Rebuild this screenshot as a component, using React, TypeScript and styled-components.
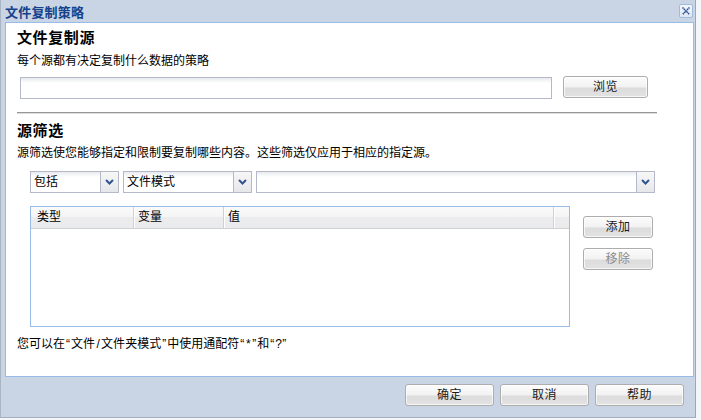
import React from "react";
import styled, { createGlobalStyle } from "styled-components";

const FONT = `"Liberation Sans", "Noto Sans CJK SC", sans-serif`;

const GlobalStyle = createGlobalStyle`
  html, body {
    margin: 0;
    padding: 0;
    background: #f4f6f9;
  }
  body {
    font-family: ${FONT};
    font-size: 12px;
    color: #000;
  }
`;

const Window = styled.div`
  width: 696px;
  height: 418px;
  box-sizing: border-box;
  background: #c9d5e4;
  border-left: 1px solid #aab5c3;
  border-right: 1px solid #9ba8b9;
  border-bottom: 1px solid #a4afbe;
  display: flex;
  flex-direction: column;
`;

const TitleBar = styled.div`
  height: 22px;
  flex: none;
  display: flex;
  align-items: center;
  justify-content: space-between;
  padding: 0 2px 0 4px;
`;

const Title = styled.span`
  font-weight: bold;
  font-size: 13px;
  color: #15428b;
  letter-spacing: 0.2px;
`;

const CloseButton = styled.div`
  width: 14px;
  height: 14px;
  box-sizing: border-box;
  border: 1px solid #a3bbdb;
  border-radius: 2px;
  background: linear-gradient(#f3f7fc, #dce6f3);
  display: flex;
  align-items: center;
  justify-content: center;
`;

const Panel = styled.div`
  margin-left: 4px;
  width: 689px;
  height: 355px;
  box-sizing: border-box;
  background: #fff;
  border: 1px solid #99bbe8;
  padding: 6px 11px 0;
  flex: none;
`;

const Heading = styled.div<{ $top?: number }>`
  margin-top: ${(p) => p.$top ?? 0}px;
  font-size: 15px;
  line-height: 18px;
  font-weight: bold;
  letter-spacing: 0.6px;
`;

const Text = styled.div<{ $top: number }>`
  margin-top: ${(p) => p.$top}px;
  font-size: 12px;
  line-height: 16px;
  white-space: nowrap;
`;

// half-width glyphs (quotes, slash, wildcards) take 6px each, like the bitmap font
const Half = styled.span`
  display: inline-block;
  width: 6px;
  text-align: center;
  font-family: "Liberation Sans", sans-serif;
`;

const Row = styled.div<{ $top: number; $left: number }>`
  display: flex;
  align-items: flex-start;
  margin-top: ${(p) => p.$top}px;
  margin-left: ${(p) => p.$left}px;
`;

const TextField = styled.div<{ $width: number }>`
  width: ${(p) => p.$width}px;
  height: 22px;
  box-sizing: border-box;
  border: 1px solid #b5b8c8;
  background: linear-gradient(to bottom, #e8eaee 0px, #ffffff 5px);
  margin-top: 1px;
`;

const Button = styled.div<{ $width: number; $disabled?: boolean }>`
  width: ${(p) => p.$width}px;
  height: 22px;
  box-sizing: border-box;
  border: 1px solid #adadad;
  border-radius: 3px;
  background: linear-gradient(
    to bottom,
    #fcfcfc 0%,
    #f1f1f1 52%,
    #dcdcdc 53%,
    #e2e2e2 100%
  );
  box-shadow: inset 0 0 0 1px rgba(255, 255, 255, 0.7);
  color: ${(p) => (p.$disabled ? "#8c8c8c" : "#1a1a1a")};
  font-size: 12px;
  line-height: 21px;
  text-align: center;
  letter-spacing: 0.5px;
  flex: none;
`;

const Separator = styled.div`
  margin-top: 13px;
  width: 640px;
  height: 0;
  border-top: 1px solid #979797;
  border-bottom: 1px solid #dcdcdc;
`;

const ComboBox = styled.div<{ $width: number }>`
  width: ${(p) => p.$width}px;
  height: 22px;
  box-sizing: border-box;
  border: 1px solid #b5b8c8;
  background: linear-gradient(to bottom, #e8eaee 0px, #ffffff 5px);
  display: flex;
  flex: none;
`;

const ComboValue = styled.div`
  flex: 1;
  padding-left: 3px;
  font-size: 12px;
  line-height: 20px;
  overflow: hidden;
`;

const Trigger = styled.div`
  width: 17px;
  border-left: 1px solid #b5b8c8;
  background: linear-gradient(to bottom, #f7f7f7, #e6e7ea);
  display: flex;
  align-items: center;
  justify-content: center;
`;

const ComboRow = styled.div`
  display: flex;
  gap: 4px;
  margin-top: 10px;
  margin-left: 13px;
`;

const GridPanel = styled.div`
  width: 540px;
  height: 121px;
  box-sizing: border-box;
  border: 1px solid #99bbe8;
  flex: none;
`;

const GridHeader = styled.div`
  height: 22px;
  box-sizing: border-box;
  display: flex;
  border-bottom: 1px solid #d0d0d0;
  background: linear-gradient(
    to bottom,
    #fafafa 0%,
    #f5f5f5 45%,
    #ececed 50%,
    #eaebed 100%
  );
`;

const HeaderCell = styled.div<{ $width?: number; $first?: boolean }>`
  width: ${(p) => (p.$width ? `${p.$width}px` : "auto")};
  flex: ${(p) => (p.$width ? "none" : "1")};
  box-sizing: border-box;
  border-left: ${(p) => (p.$first ? "none" : "1px solid #d0d0d0")};
  box-shadow: ${(p) => (p.$first ? "none" : "inset 1px 0 0 #fff")};
  padding-left: ${(p) => (p.$first ? 6 : 4)}px;
  font-size: 12px;
  line-height: 21px;
`;

const SideButtons = styled.div`
  display: flex;
  flex-direction: column;
  gap: 10px;
  padding-top: 10px;
  margin-left: 13px;
`;

const Footer = styled.div`
  flex: 1;
  display: flex;
  justify-content: flex-end;
  align-items: flex-start;
  gap: 6px;
  padding: 7px 11px 0 0;
`;

const Chevron = () => (
  <svg width="9" height="6" viewBox="0 0 9 6">
    <polyline
      points="1,1 4.5,4.5 8,1"
      fill="none"
      stroke="#30548f"
      strokeWidth="2"
    />
  </svg>
);

const Combo: React.FC<{ width: number; value?: string }> = ({
  width,
  value,
}) => (
  <ComboBox $width={width}>
    <ComboValue>{value}</ComboValue>
    <Trigger>
      <Chevron />
    </Trigger>
  </ComboBox>
);

const HALF = "“”/*?";
const Mixed: React.FC<{ text: string }> = ({ text }) => (
  <>
    {Array.from(text).map((ch, i) =>
      HALF.includes(ch) ? <Half key={i}>{ch}</Half> : ch
    )}
  </>
);

export default function App() {
  return (
    <>
      <GlobalStyle />
      <Window>
        <TitleBar>
          <Title>文件复制策略</Title>
          <CloseButton>
            <svg width="10" height="10" viewBox="0 0 10 10">
              <path
                d="M1.5 1.5 L8.5 8.5 M8.5 1.5 L1.5 8.5"
                stroke="#2a4f8f"
                strokeWidth="1.6"
                strokeDasharray="1.4 0.6"
              />
            </svg>
          </CloseButton>
        </TitleBar>
        <Panel>
          <Heading>文件复制源</Heading>
          <Text $top={6}>每个源都有决定复制什么数据的策略</Text>
          <Row $top={7} $left={3}>
            <TextField $width={532} />
            <Button $width={85} style={{ marginLeft: 11 }}>
              浏览
            </Button>
          </Row>
          <Separator />
          <Heading $top={8}>源筛选</Heading>
          <Text $top={5}>
            源筛选使您能够指定和限制要复制哪些内容。这些筛选仅应用于相应的指定源。
          </Text>
          <ComboRow>
            <Combo width={89} value="包括" />
            <Combo width={129} value="文件模式" />
            <Combo width={399} />
          </ComboRow>
          <Row $top={13} $left={13}>
            <GridPanel>
              <GridHeader>
                <HeaderCell $first $width={102}>
                  类型
                </HeaderCell>
                <HeaderCell $width={90}>变量</HeaderCell>
                <HeaderCell $width={330}>值</HeaderCell>
                <HeaderCell />
              </GridHeader>
            </GridPanel>
            <SideButtons>
              <Button $width={70}>添加</Button>
              <Button $width={70} $disabled>
                移除
              </Button>
            </SideButtons>
          </Row>
          <Text $top={9}>
            <Mixed text="您可以在“文件/文件夹模式”中使用通配符“*”和“?”" />
          </Text>
        </Panel>
        <Footer>
          <Button $width={89}>确定</Button>
          <Button $width={89}>取消</Button>
          <Button $width={89}>帮助</Button>
        </Footer>
      </Window>
    </>
  );
}
